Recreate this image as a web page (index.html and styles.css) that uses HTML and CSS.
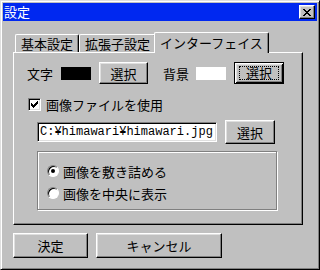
FILE: index.html
```html
<!DOCTYPE html>
<html lang="ja">
<head>
  <meta charset="UTF-8" />
  <title>設定</title>
  <link rel="stylesheet" href="styles.css">
</head>
<body>
  <div class="window">
    <div class="titlebar">
      <span class="title">設定</span>
      <button class="close-btn" aria-label="閉じる">
        <svg width="8" height="7" viewBox="0 0 8 7" shape-rendering="crispEdges">
          <path d="M0 0h2v1h-2zM6 0h2v1h-2zM1 1h2v1h-2zM5 1h2v1h-2zM2 2h4v1h-4zM3 3h2v1h-2zM2 4h4v1h-4zM1 5h2v1h-2zM5 5h2v1h-2zM0 6h2v1h-2zM6 6h2v1h-2z" fill="#000"/>
        </svg>
      </button>
    </div>

    <div class="content">
      <div class="tabs">
        <div class="tab">基本設定</div>
        <div class="tab">拡張子設定</div>
        <div class="tab active">インターフェイス</div>
      </div>

      <div class="panel">
        <!-- text / background colour -->
        <div class="color-row">
          <span class="label">文字</span>
          <span class="swatch swatch-black"></span>
          <button class="btn pick">選択</button>
          <span class="label bg-label">背景</span>
          <span class="swatch swatch-white"></span>
          <button class="btn pick default"><span class="focus">選択</span></button>
        </div>

        <label class="check-row">
          <span class="checkbox">
            <svg width="7" height="7" viewBox="0 0 7 7" shape-rendering="crispEdges">
              <path d="M6 0h1v3h-1zM5 1h1v3h-1zM4 2h1v3h-1zM3 3h1v3h-1zM2 4h1v3h-1zM1 3h1v3h-1zM0 2h1v3h-1z" fill="#000"/>
            </svg>
          </span>
          画像ファイルを使用
        </label>

        <div class="file-row">
          <div class="textbox">C:¥himawari¥himawari.jpg</div>
          <button class="btn file-pick">選択</button>
        </div>

        <div class="group">
          <div class="radio-row"><span class="radio checked"></span>画像を敷き詰める</div>
          <div class="radio-row"><span class="radio"></span>画像を中央に表示</div>
        </div>
      </div>

      <div class="actions">
        <button class="btn ok">決定</button>
        <button class="btn cancel">キャンセル</button>
      </div>
    </div>
  </div>
</body>
</html>
```

FILE: styles.css
```css
/* Basic reset */
* {
  margin: 0;
  padding: 0;
  box-sizing: border-box;
}

body {
  background-color: #c0c0c0;
  color: #000000;
  font-family: "Noto Sans CJK JP", "Noto Sans", sans-serif;
  font-size: 13px;
}

/* Outer dialog frame */
.window {
  width: 320px;
  height: 270px;
  background-color: #c0c0c0;
  border: 1px solid;
  border-color: #dfdfdf #000000 #000000 #dfdfdf;
  box-shadow: inset 1px 1px #ffffff, inset -1px -1px #808080;
  padding: 2px;
  display: flex;
  flex-direction: column;
}

/* Title bar */
.titlebar {
  height: 18px;
  background-color: #0028f0;
  display: flex;
  align-items: center;
  justify-content: space-between;
  padding: 0 2px 0 1px;
}

.title {
  color: #ffffff;
  font-size: 13px;
  line-height: 18px;
}

.close-btn {
  width: 16px;
  height: 14px;
  background-color: #c0c0c0;
  border: 1px solid;
  border-color: #ffffff #000000 #000000 #ffffff;
  box-shadow: inset -1px -1px #808080, inset 1px 1px #dfdfdf;
  display: flex;
  align-items: center;
  justify-content: center;
}

/* Body of the dialog */
.content {
  flex: 1;
  padding: 11px 14px 0 10px;
}

/* Tabs */
.tabs {
  display: flex;
  align-items: flex-end;
  height: 20px;
  padding-left: 2px;
}

.tab {
  height: 18px;
  line-height: 17px;
  padding: 0 5px;
  border: 1px solid;
  border-bottom: none;
  border-color: #ffffff #000000 #000000 #ffffff;
  border-radius: 2px 2px 0 0;
  box-shadow: inset -1px 0 #808080;
  white-space: nowrap;
}

.tab.active {
  position: relative;
  z-index: 1;
  height: 21px;
  line-height: 19px;
  margin: 0 -2px -1px -2px;
  background-color: #c0c0c0;
}

/* Tab page */
.panel {
  width: 290px;
  height: 173px;
  border: 1px solid;
  border-color: #ffffff #000000 #000000 #ffffff;
  box-shadow: inset -1px -1px #808080;
  padding: 9px 0 0 13px;
}

/* Buttons */
.btn {
  background-color: #c0c0c0;
  border: 1px solid;
  border-color: #ffffff #000000 #000000 #ffffff;
  box-shadow: inset -1px -1px #808080, inset 1px 1px #dfdfdf;
  font-family: inherit;
  font-size: 13px;
  color: #000000;
  display: flex;
  align-items: center;
  justify-content: center;
}

.btn.default {
  border-color: #000000;
  box-shadow: inset 1px 1px #ffffff, inset -1px -1px #000000,
              inset 2px 2px #dfdfdf, inset -2px -2px #808080;
}

.btn .focus {
  border: 1px dotted #000000;
  width: 40px;
  height: 14px;
  line-height: 12px;
  text-align: center;
}

/* Colour row */
.color-row {
  display: flex;
  align-items: center;
  height: 22px;
}

.swatch {
  width: 30px;
  height: 13px;
  margin-left: 8px;
}
.swatch-black { background-color: #000000; }
.swatch-white { background-color: #ffffff; margin-left: 7px; }

.pick {
  width: 49px;
  height: 22px;
  margin-left: 8px;
}
.pick.default { width: 50px; }

.bg-label {
  margin-left: 15px;
}

/* Checkbox */
.check-row {
  display: flex;
  align-items: center;
  height: 13px;
  margin-top: 14px;
  padding-left: 1px;
}

.checkbox {
  width: 13px;
  height: 13px;
  margin-right: 5px;
  background-color: #ffffff;
  border: 1px solid;
  border-color: #808080 #ffffff #ffffff #808080;
  box-shadow: inset 1px 1px #000000, inset -1px -1px #dfdfdf;
  display: flex;
  align-items: center;
  justify-content: center;
}

/* File path row */
.file-row {
  display: flex;
  align-items: center;
  height: 24px;
  margin-top: 9px;
  padding-left: 10px;
}

.textbox {
  width: 180px;
  height: 20px;
  background-color: #ffffff;
  border: 1px solid;
  border-color: #808080 #ffffff #ffffff #808080;
  box-shadow: inset 1px 1px #000000, inset -1px -1px #dfdfdf;
  padding: 0 2px;
  font-family: "Liberation Mono", monospace;
  font-size: 12px;
  line-height: 18px;
  white-space: nowrap;
  overflow: hidden;
}

.file-pick {
  width: 50px;
  height: 24px;
  margin-left: 8px;
}

/* Radio group */
.group {
  width: 240px;
  height: 59px;
  margin: 7px 0 0 10px;
  border: 1px solid #808080;
  box-shadow: inset 1px 1px #ffffff, 1px 1px #ffffff;
  padding: 9px 0 0 9px;
  display: flex;
  flex-direction: column;
  gap: 2px;
}

.radio-row {
  display: flex;
  align-items: center;
  height: 20px;
}

.radio {
  width: 12px;
  height: 12px;
  margin-right: 4px;
  border-radius: 50%;
  background-color: #ffffff;
  border: 1px solid;
  border-color: #808080 #ffffff #ffffff #808080;
  box-shadow: inset 1px 1px #000000;
  display: flex;
  align-items: center;
  justify-content: center;
}

.radio.checked::after {
  content: "";
  width: 4px;
  height: 4px;
  border-radius: 50%;
  background-color: #000000;
}

/* OK / Cancel */
.actions {
  display: flex;
  margin-top: 8px;
  gap: 8px;
}

.ok {
  width: 75px;
  height: 25px;
}

.cancel {
  width: 126px;
  height: 25px;
}
```
